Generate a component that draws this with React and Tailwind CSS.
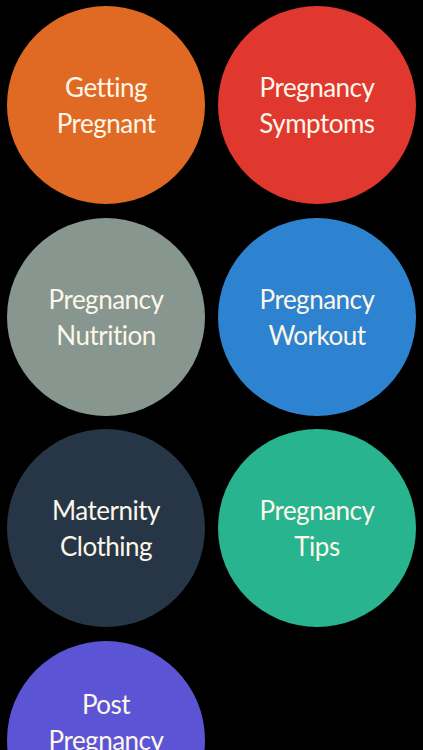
const ITEMS = [
  { lines: ['Getting', 'Pregnant'], color: 'bg-[#e06a24]' },
  { lines: ['Pregnancy', 'Symptoms'], color: 'bg-[#e0372f]' },
  { lines: ['Pregnancy', 'Nutrition'], color: 'bg-[#87968f]' },
  { lines: ['Pregnancy', 'Workout'], color: 'bg-[#2e83d0]' },
  { lines: ['Maternity', 'Clothing'], color: 'bg-[#263646]' },
  { lines: ['Pregnancy', 'Tips'], color: 'bg-[#28b48e]' },
  { lines: ['Post', 'Pregnancy'], color: 'bg-[#5b55d6]', lift: true },
];

export default function App() {
  return (
    <div className="h-[750px] w-[423px] overflow-hidden bg-black">
      <div className="grid grid-cols-[198px_198px] gap-x-[13px] gap-y-[13.5px] pl-[7px] pt-[6px]">
        {ITEMS.map(item => (
          <div
            key={item.lines.join(' ')}
            className={`flex h-[198px] w-[198px] flex-col items-center justify-center rounded-full ${item.color} ${item.lift ? 'pb-[36px]' : ''}`}
          >
            {item.lines.map(line => (
              <span
                key={line}
                className="text-[26px] leading-[36px] text-[#fdf7ea] tracking-[-0.5px]"
                style={{ fontFamily: 'Lato, "Open Sans", sans-serif' }}
              >
                {line}
              </span>
            ))}
          </div>
        ))}
      </div>
    </div>
  );
}
